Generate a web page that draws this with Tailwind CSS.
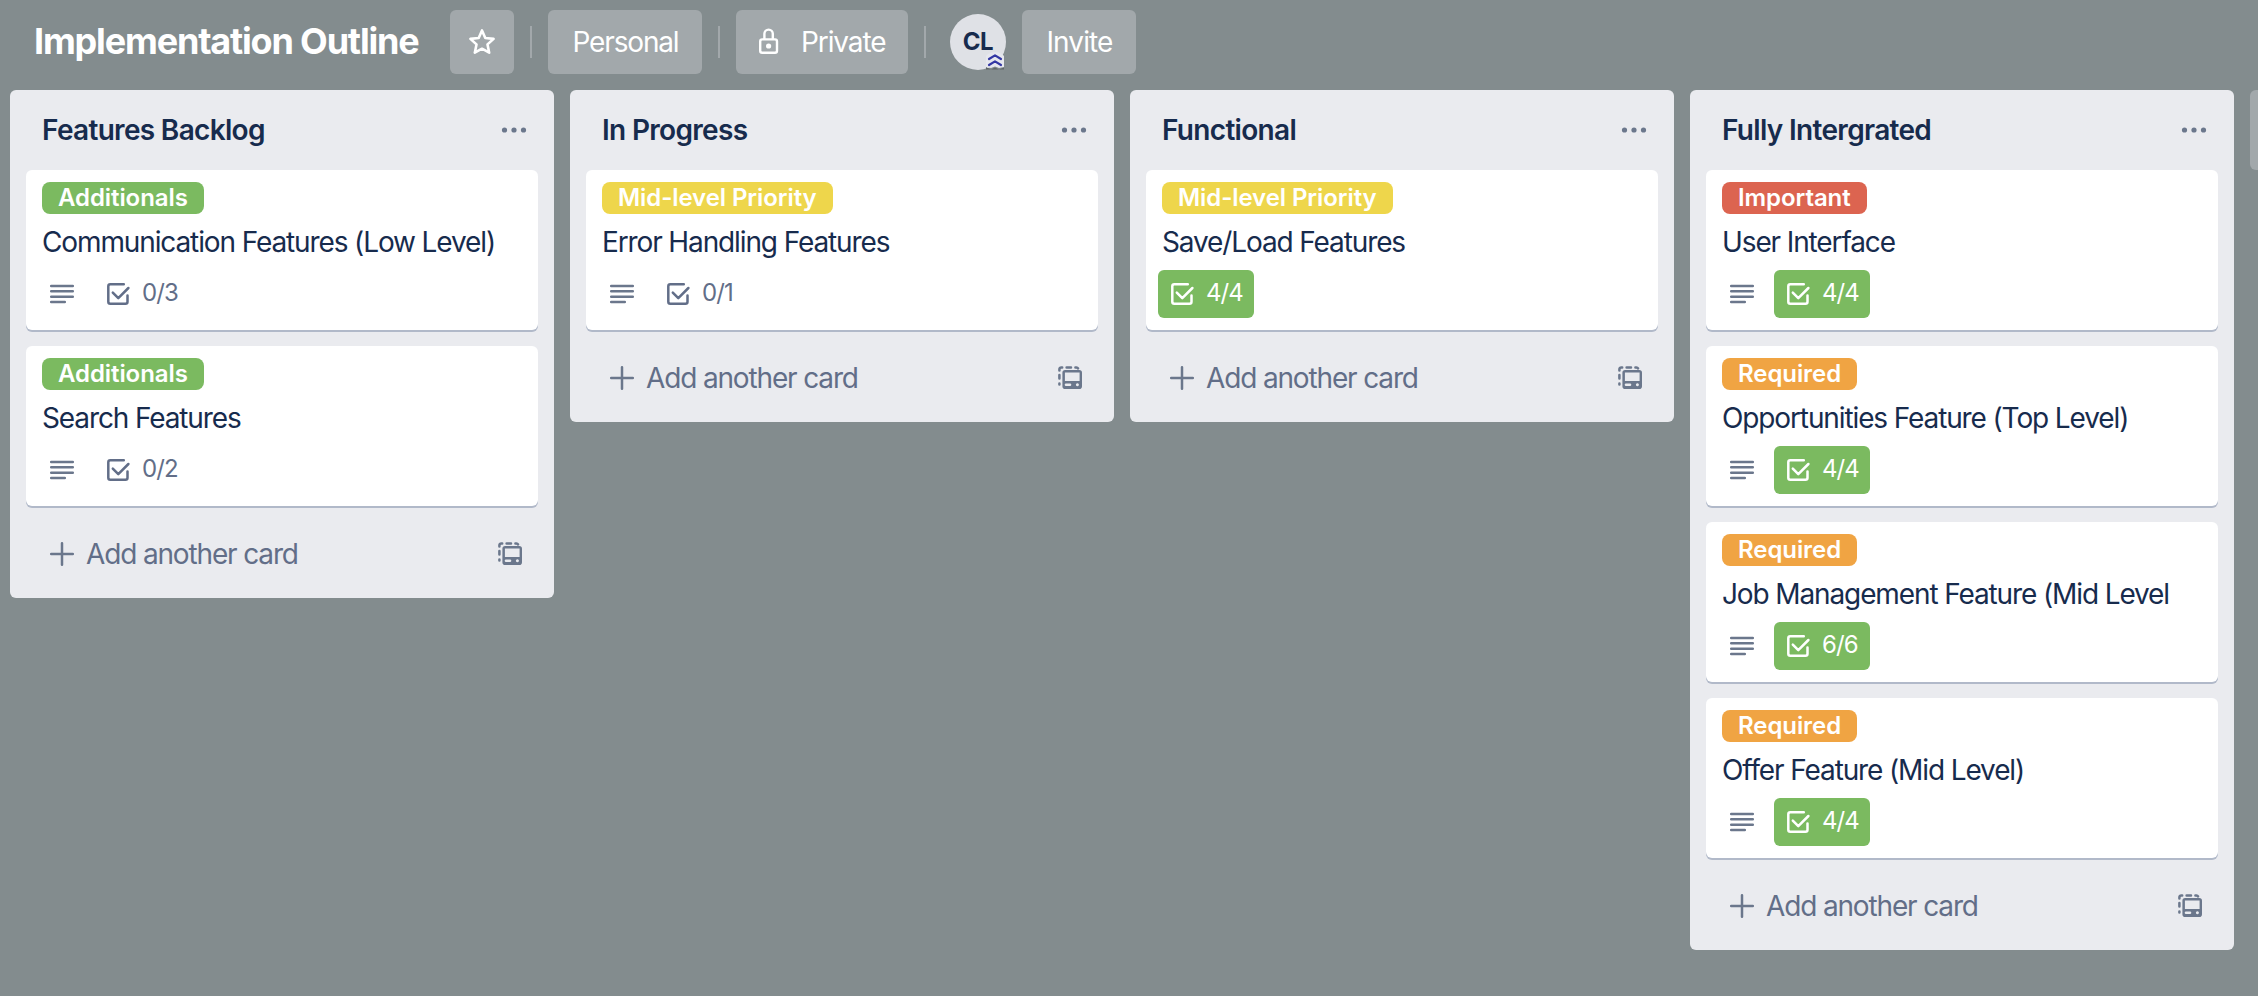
<!DOCTYPE html>
<html lang="en">
<head>
<meta charset="utf-8">
<title>Implementation Outline</title>
<script src="https://cdn.jsdelivr.net/npm/@tailwindcss/browser@4"></script>
</head>
<body class="h-screen overflow-hidden bg-[#838c8e] font-['Inter',sans-serif] text-[28px] text-[#172b4d]">
<svg class="hidden">
  <symbol id="lines" viewBox="0 0 32 32"><path d="M5.2 8H26.8M5.2 13.3H26.8M5.2 18.7H26.8M5.2 24H18.8" fill="none" stroke="currentColor" stroke-width="2.5" stroke-linecap="round"/></symbol>
  <symbol id="check" viewBox="0 0 32 32"><path d="M21.8 6.3H8.3A2 2 0 0 0 6.3 8.3V23.7a2 2 0 0 0 2 2H23.5a2 2 0 0 0 2-2V17.4M10.8 14.6L16.3 20.2L26.4 10" fill="none" stroke="currentColor" stroke-width="2.5" stroke-linecap="round" stroke-linejoin="round"/></symbol>
  <symbol id="plus" viewBox="0 0 32 32"><path d="M16 5.2V26.8M5.2 16H26.8" fill="none" stroke="currentColor" stroke-width="2.5" stroke-linecap="round"/></symbol>
  <symbol id="dots" viewBox="0 0 32 32"><g fill="currentColor"><circle cx="6.5" cy="16" r="2.6"/><circle cx="16" cy="16" r="2.6"/><circle cx="25.5" cy="16" r="2.6"/></g></symbol>
  <symbol id="template" viewBox="0 0 24 24"><path fill="none" stroke="currentColor" stroke-width="2.5" stroke-linecap="round" d="M1.4 4.4V3.2a1.8 1.8 0 0 1 1.8-1.8H4.2M8.6 1.4H13M17.4 1.4H18.2a1.8 1.8 0 0 1 1.8 1M1.4 9V12.6M1.4 17.6V18.6"/><path fill="currentColor" fill-rule="evenodd" d="M7.2 4H21.2A2.8 2.8 0 0 1 24 6.8V20.2A2.8 2.8 0 0 1 21.2 23H7.2A2.8 2.8 0 0 1 4.4 20.2V6.8A2.8 2.8 0 0 1 7.2 4ZM6.9 6.4V14.9H21.6V6.4ZM8 17.4a1.2 1.2 0 0 0 0 2.6H12a1.2 1.2 0 0 0 0-2.6ZM19.4 17.2a1.5 1.5 0 1 0 .01 0Z"/></symbol>
</svg>

<header class="flex h-[90px] items-start pt-[10px] font-normal text-white">
  <h1 class="ml-[34px] h-16 w-[416px] whitespace-nowrap text-[36px] leading-[62px] font-bold tracking-[-1.18px]">Implementation Outline</h1>
  <button class="flex size-16 items-center justify-center rounded-md bg-[#a2a8ab]">
    <svg class="size-8" viewBox="0 0 32 32"><path fill="none" stroke="currentColor" stroke-width="2.6" stroke-linejoin="round" d="M16 4.4L19.3 12L27.6 12.9L21.5 18.4L23.2 26.7L16 22.7L8.8 26.7L10.5 18.4L4.4 12.9L12.7 12Z"/></svg>
  </button>
  <div class="mx-4 mt-4 h-8 w-0.5 bg-[#a2a8ab]"></div>
  <button class="h-16 w-[154px] rounded-md bg-[#a2a8ab] pl-px leading-16 tracking-[-1.15px]">Personal</button>
  <div class="mx-4 mt-4 h-8 w-0.5 bg-[#a2a8ab]"></div>
  <button class="flex h-16 w-[172px] items-center rounded-md bg-[#a2a8ab] pl-4 leading-16 tracking-[-1.1px]">
    <svg class="size-8" viewBox="0 0 32 32"><g fill="none" stroke="currentColor" stroke-width="2.4"><rect x="8.2" y="13.4" width="16.8" height="13.4" rx="2"/><path d="M12.4 13.4V7.8a4.2 4.2 0 0 1 8.4 0V13.4"/></g><circle cx="16.6" cy="20" r="2.6" fill="currentColor"/></svg>
    <span class="ml-[17px]">Private</span>
  </button>
  <div class="mx-4 mt-4 h-8 w-0.5 bg-[#a2a8ab]"></div>
  <div class="relative mt-1 ml-2 size-14 rounded-full bg-[#dfe1e6] text-center text-[24px] leading-[55px] font-bold tracking-[-0.4px] text-[#172b4d]">CL
    <svg class="absolute top-[38px] left-[36px] h-[19px] w-[18px]" viewBox="0 0 18 19"><path d="M0 15L5 17.5L9 15.5L13 17.5L18 15.5V17.5H0Z" fill="#5f6567"/><path d="M2 2Q9-2 16 2L18 4V15L13 16L9 14.5L5 16L0 15V4Z" fill="#e6e7ee"/><path d="M3 7L9 3.4L15 7M3 13L9 9.4L15 13" fill="none" stroke="#3236a4" stroke-width="2.2" stroke-linecap="round" stroke-linejoin="round"/></svg>
  </div>
  <button class="ml-4 h-16 w-[114px] rounded-md bg-[#a2a8ab] pl-px leading-16 tracking-[-0.9px]">Invite</button>
</header>

<main id="board" class="flex items-start gap-4 overflow-hidden pb-1 pl-[10px]"></main>

<script>
const green = 'bg-[#7bba60]', yellow = 'bg-[#eed64b]', red = 'bg-[#dc6450]', orange = 'bg-[#f0a443]';
const lists = [
  ['Features Backlog', [
    ['Additionals', green, 'Communication Features (Low Level)', true, '0/3'],
    ['Additionals', green, 'Search Features', true, '0/2']]],
  ['In Progress', [['Mid-level Priority', yellow, 'Error Handling Features', true, '0/1']]],
  ['Functional', [['Mid-level Priority', yellow, 'Save/Load Features', false, '4/4']]],
  ['Fully Intergrated', [
    ['Important', red, 'User Interface', true, '4/4'],
    ['Required', orange, 'Opportunities Feature (Top Level)', true, '4/4'],
    ['Required', orange, 'Job Management Feature (Mid Level', true, '6/6'],
    ['Required', orange, 'Offer Feature (Mid Level)', true, '4/4']]]
];
const icon = (id, cls) => `<svg class="${cls}"><use href="#${id}"/></svg>`;
const card = ([label, color, title, desc, count]) => `
  <article class="h-40 rounded-md bg-white px-4 pt-3 shadow-[0_2px_0_#b1b9c9]">
    <div class="flex"><span class="h-8 rounded-lg px-4 text-[24px] leading-[31px] font-semibold tracking-[-0.08px] text-white ${color}">${label}</span></div>
    <h3 class="mt-2 h-10 whitespace-nowrap leading-10 tracking-[-1.12px]">${title}</h3>
    <div class="-ml-1 mt-2 flex gap-2 text-[#6b778c]">
      ${desc ? `<span class="flex size-12 items-center justify-center">${icon('lines', 'size-8')}</span>` : ''}
      <span class="flex h-12 w-24 items-center rounded-md pl-2 text-[24px] tracking-[-0.9px] ${count[0] === '0' ? 'text-[#626e88]' : 'text-white ' + green}">${icon('check', 'size-8')}<span class="ml-2 leading-[46px] -translate-y-px">${count}</span></span>
    </div>
  </article>`;
document.getElementById('board').innerHTML = lists.map(([name, cards]) => `
  <section class="w-[544px] shrink-0 rounded-md bg-[#eaebef] px-4">
    <header class="flex h-20 items-center justify-between pr-2 pl-4">
      <h2 class="leading-10 font-semibold tracking-[-0.68px]">${name}</h2>
      ${icon('dots', 'size-8 text-[#6b778c]')}
    </header>
    <div class="flex flex-col gap-4">${cards.map(card).join('')}</div>
    <footer class="flex h-[92px] items-center pt-1 pr-4 pl-5 text-[#626e88]">
      ${icon('plus', 'size-8 text-[#6b778c]')}
      <span class="ml-2 grow tracking-[-1.15px]">Add another card</span>
      ${icon('template', 'size-6 text-[#6b778c]')}
    </footer>
  </section>`).join('') + '<div class="h-20 w-2 shrink-0 rounded-l-md bg-[#a2a8ab]"></div>';
</script>
</body>
</html>
